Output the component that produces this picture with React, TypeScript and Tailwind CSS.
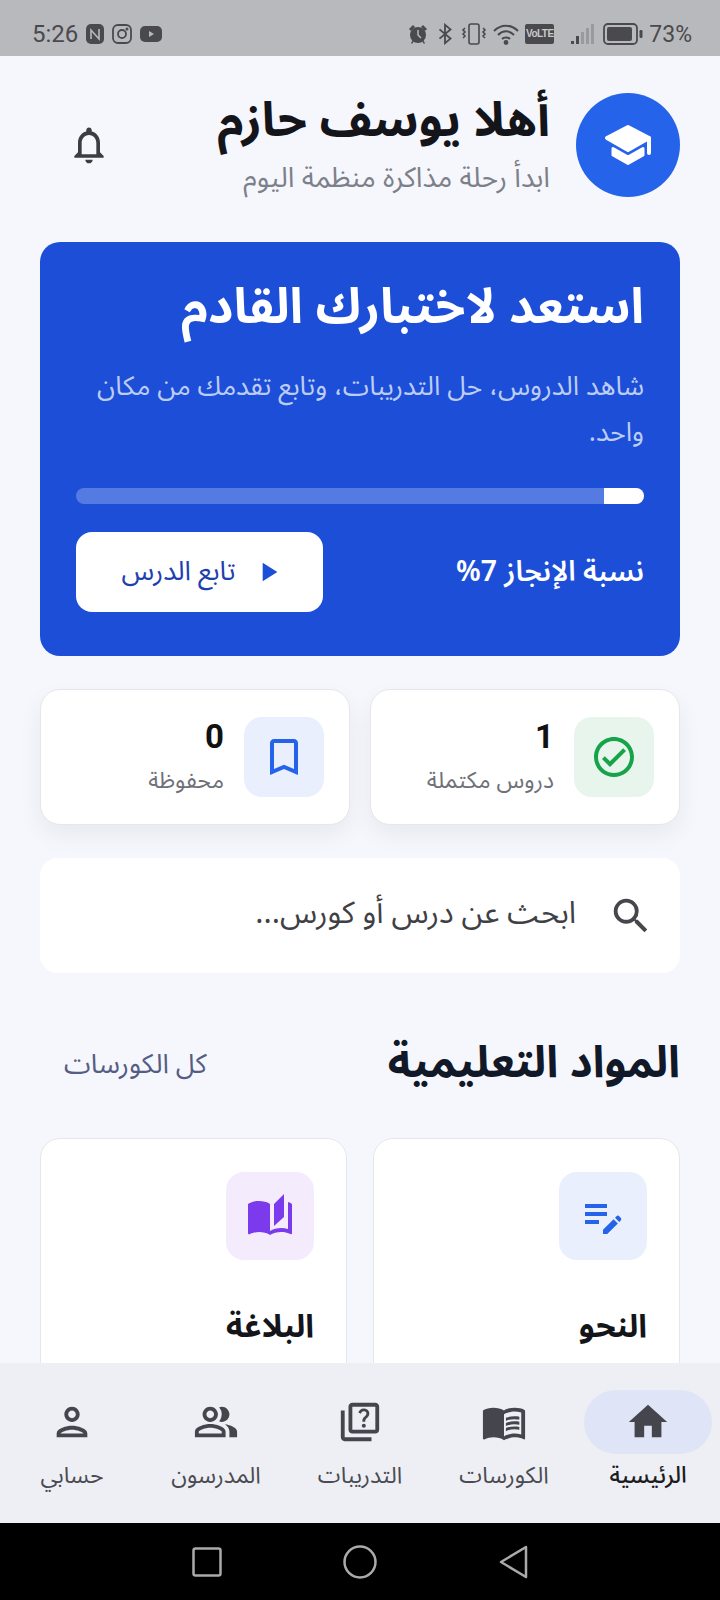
import {
  MdAutoStories,
  MdEditNote,
  MdHome,
  MdMenuBook,
  MdNotificationsNone,
  MdOutlineBookmarkBorder,
  MdOutlineCheckCircle,
  MdOutlinePeopleAlt,
  MdOutlinePerson,
  MdOutlineQuiz,
  MdPlayArrow,
  MdSearch,
} from "react-icons/md";
import type { IconType } from "react-icons";

const arabic = "font-['Noto_Sans_Arabic','Noto_Sans','DejaVu_Sans',sans-serif]";

interface NavItem {
  label: string;
  icon: IconType;
  active?: boolean;
}

const navItems: NavItem[] = [
  { label: "الرئيسية", icon: MdHome, active: true },
  { label: "الكورسات", icon: MdMenuBook },
  { label: "التدريبات", icon: MdOutlineQuiz },
  { label: "المدرسون", icon: MdOutlinePeopleAlt },
  { label: "حسابي", icon: MdOutlinePerson },
];

function StatusBar() {
  return (
    <div dir="ltr" className="flex h-14 shrink-0 items-center justify-between bg-[#b8b9bc] pl-8 pr-7 pt-[12px] text-[#4a4a4e]">
      <div className="flex items-center gap-2">
        <span className="font-['Roboto',sans-serif] text-[24px] leading-none">5:26</span>
        <svg viewBox="0 0 18 20" className="h-5 w-[18px]">
          <rect width="18" height="20" rx="5" fill="#4a4a4e" />
          <path d="M5 15V6l8 9V5" fill="none" stroke="#b8b9bc" strokeWidth="1.6" />
        </svg>
        <svg viewBox="0 0 20 20" className="h-5 w-5" fill="none" stroke="#4a4a4e" strokeWidth="1.8">
          <rect x="1" y="1" width="18" height="18" rx="5" />
          <circle cx="10" cy="10" r="4" />
          <circle cx="15" cy="5" r=".6" />
        </svg>
        <svg viewBox="0 0 22 16" className="h-4 w-[22px]">
          <rect width="22" height="16" rx="5" fill="#4a4a4e" />
          <path d="M9 5l5 3-5 3z" fill="#b8b9bc" />
        </svg>
      </div>
      <div className="flex items-center">
        <svg viewBox="0 0 22 22" className="mr-2 h-[22px] w-[22px]" fill="#4a4a4e">
          <circle cx="11" cy="12" r="8" />
          <path d="M2 6l4-4 2 2-4 4zM20 6l-4-4-2 2 4 4zM4 20l2-3 1 1-2 3zM18 20l-2-3-1 1 2 3z" />
          <path d="M11 7v5l3 3" fill="none" stroke="#b8b9bc" strokeWidth="1.5" />
        </svg>
        <svg viewBox="0 0 16 24" className="mr-2 h-[22px] w-4" fill="none" stroke="#4a4a4e" strokeWidth="2">
          <path d="M2 7l12 10-6 5V2l6 5L2 17" />
        </svg>
        <svg viewBox="0 0 26 22" className="mr-[6px] h-[22px] w-[26px]" fill="none" stroke="#4a4a4e" strokeWidth="1.6">
          <rect x="8" y="1" width="10" height="20" rx="2" />
          <path d="M4 5l-2 2 2 2-2 2 2 2-2 2M22 5l2 2-2 2 2 2-2 2 2 2" />
        </svg>
        <svg viewBox="0 0 26 22" className="mr-[6px] h-[22px] w-[26px]" fill="none" stroke="#4a4a4e" strokeWidth="2">
          <path d="M1 8c7-7 17-7 24 0M5 12c5-5 11-5 16 0M9 16c2-2 6-2 8 0" />
          <circle cx="13" cy="19.5" r="1.4" fill="#4a4a4e" />
        </svg>
        <div className="mr-[17px] flex h-5 w-[29px] items-center justify-center rounded-[2px] bg-[#4a4a4e] font-['Liberation_Sans',sans-serif] text-[10px] font-bold leading-none tracking-[-0.5px] text-[#c8c9cc]">
          VoLTE
        </div>
        <svg viewBox="0 0 23 22" className="mr-[9px] h-[22px] w-[23px]">
          <rect x="0" y="18" width="3" height="3" fill="#4a4a4e" />
          <rect x="5" y="13" width="3" height="8" fill="#4a4a4e" />
          <rect x="10" y="9" width="3" height="12" fill="#9a9a9e" />
          <rect x="15" y="5" width="3" height="16" fill="#9a9a9e" />
          <rect x="20" y="1" width="3" height="20" fill="#9a9a9e" />
        </svg>
        <svg viewBox="0 0 40 22" className="mr-[6px] h-[22px] w-10">
          <rect x="1" y="1" width="33" height="20" rx="4" fill="none" stroke="#4a4a4e" strokeWidth="1.8" />
          <rect x="4" y="4" width="25" height="14" rx="2" fill="#4a4a4e" />
          <rect x="36.5" y="7" width="3" height="8" rx="1.2" fill="#4a4a4e" />
        </svg>
        <span className="font-['Roboto',sans-serif] text-[23px] leading-none">73%</span>
      </div>
    </div>
  );
}

function CapIcon() {
  return (
    <svg viewBox="0 0 48 42" className="h-[42px] w-12" fill="#fff" stroke="#fff" strokeLinejoin="round" strokeLinecap="round">
      <path d="M3 14L24 3l21 11-21 12z" strokeWidth="4" />
      <path d="M9 24.5v6.5l15 8.5 15-8.5v-6.5l-15 8.5z" strokeWidth="3" />
      <path d="M45 14v15" fill="none" strokeWidth="4" />
    </svg>
  );
}

function Header() {
  return (
    <div className="flex items-center justify-between pl-[27px]">
      <div className="flex items-center gap-[26px]">
        <div className="flex h-[104px] w-[104px] items-center justify-center rounded-full bg-[#2563eb]">
          <CapIcon />
        </div>
        <div>
          <h1 className="text-[48px] font-bold leading-[56px] text-[#14151a]">أهلا يوسف حازم</h1>
          <p className="mt-3 text-[28px] leading-[36px] text-[#7d808a]">ابدأ رحلة مذاكرة منظمة اليوم</p>
        </div>
      </div>
      <MdNotificationsNone size={44} className="text-[#3c3d42]" />
    </div>
  );
}

function Hero() {
  return (
    <div className="mt-[45px] h-[414px] rounded-[20px] bg-[#1d4ed8] px-9 pt-[36px] text-white">
      <h2 className="text-[49px] font-bold leading-[60px]">استعد لاختبارك القادم</h2>
      <p className="mt-[26px] text-[26.6px] leading-[46px] text-[#bccdf5]">
        شاهد الدروس، حل التدريبات، وتابع تقدمك من مكان واحد.
      </p>
      <div className="mt-[32px] h-4 overflow-hidden rounded-full bg-white/25">
        <div className="h-full w-[7%] bg-white" />
      </div>
      <div className="mt-7 flex items-center justify-between">
        <span className="text-[28.3px] font-semibold leading-[40px]">نسبة الإنجاز 7%</span>
        <div className="flex h-20 w-[247px] items-center justify-center gap-4 rounded-2xl bg-white pl-[6px] text-[#1e40af]">
          <MdPlayArrow size={32} className="-scale-x-100 rotate-180 text-[#1d4ed8]" />
          <span className="text-[27px]">تابع الدرس</span>
        </div>
      </div>
    </div>
  );
}

function Stat({ value, label, icon: Icon, box, color }: { value: string; label: string; icon: IconType; box: string; color: string }) {
  return (
    <div className="flex h-[136px] items-center gap-5 rounded-[20px] border border-[#e5e7eb] bg-white pl-6 pr-[25px] shadow-[0_10px_24px_rgba(15,23,42,0.06)]">
      <div className={`flex h-20 w-20 items-center justify-center rounded-[18px] ${box}`}>
        <Icon size={48} className={color} />
      </div>
      <div>
        <div className="font-['Roboto',sans-serif] text-[33px] font-bold leading-[38px] text-[#111]">{value}</div>
        <div className="mt-[9px] text-[23px] leading-[32px] text-[#6f7178]">{label}</div>
      </div>
    </div>
  );
}

function Subject({ title, icon: Icon, box, color }: { title: string; icon: IconType; box: string; color: string }) {
  return (
    <div className="h-[260px] rounded-[20px] border border-[#e5e7eb] bg-white px-[32px] pt-[33px]">
      <div className={`flex h-[88px] w-[88px] items-center justify-center rounded-[18px] ${box}`}>
        <Icon size={48} className={color} />
      </div>
      <h3 className="mt-[46px] text-[32px] font-bold leading-[42px] text-[#14151a]">{title}</h3>
    </div>
  );
}

export default function App() {
  return (
    <div dir="rtl" className={`flex h-[1600px] w-[720px] flex-col overflow-hidden bg-[#f5f7fc] ${arabic}`}>
      <StatusBar />
      <main className="min-h-0 flex-1 overflow-hidden px-10 pt-[37px]">
        <Header />
        <Hero />
        <div className="mt-[33px] grid grid-cols-2 gap-5">
          <Stat value="1" label="دروس مكتملة" icon={MdOutlineCheckCircle} box="bg-[#e8f5ec]" color="text-[#16a34a]" />
          <Stat value="0" label="محفوظة" icon={MdOutlineBookmarkBorder} box="bg-[#e9effc]" color="text-[#2563eb]" />
        </div>
        <div className="mt-[33px] flex h-[115px] items-center gap-8 rounded-[18px] bg-white px-[26px] text-[30.7px] leading-[44px] text-[#3f4045]">
          <MdSearch size={46} className="text-[#46474c]" />
          <span className="pb-1">ابحث عن درس أو كورس...</span>
        </div>
        <div className="mt-[62px] flex items-center justify-between pl-6">
          <h2 className="text-[44px] font-bold leading-[56px] text-[#111827]">المواد التعليمية</h2>
          <span className="pt-[5px] text-[27px] text-[#555d84]">كل الكورسات</span>
        </div>
        <div className="mt-[47px] grid grid-cols-2 gap-[26px]">
          <Subject title="النحو" icon={MdEditNote} box="bg-[#e9effc]" color="text-[#2563eb]" />
          <Subject title="البلاغة" icon={MdAutoStories} box="bg-[#f4ecfd]" color="text-[#7c3aed]" />
        </div>
      </main>
      <nav className="grid h-[160px] shrink-0 grid-cols-5 bg-[#eeeff4] pt-[27px]">
        {navItems.map(({ label, icon: Icon, active }) => (
          <div key={label} className="flex flex-col items-center">
            <div className={`flex h-16 w-32 items-center justify-center rounded-full ${active ? "bg-[#dfe4f6]" : ""}`}>
              <Icon size={46} className="text-[#44454d]" />
            </div>
            <span className={`mt-[6px] text-[23px] leading-[32px] ${active ? "font-medium text-[#1b1c20]" : "text-[#4a4b52]"}`}>{label}</span>
          </div>
        ))}
      </nav>
      <div className="flex h-[77px] shrink-0 items-center justify-center gap-[120px] bg-black">
        <svg viewBox="0 0 30 36" className="h-9 w-[30px]" fill="none" stroke="#aaa" strokeWidth="2.5" strokeLinejoin="round">
          <path d="M28 3L3 18l25 15z" />
        </svg>
        <svg viewBox="0 0 36 36" className="h-9 w-9" fill="none" stroke="#aaa" strokeWidth="2.5">
          <circle cx="18" cy="18" r="15.5" />
        </svg>
        <svg viewBox="0 0 30 30" className="h-[30px] w-[30px]" fill="none" stroke="#aaa" strokeWidth="2.5">
          <rect x="1.5" y="1.5" width="27" height="27" rx="2" />
        </svg>
      </div>
    </div>
  );
}
